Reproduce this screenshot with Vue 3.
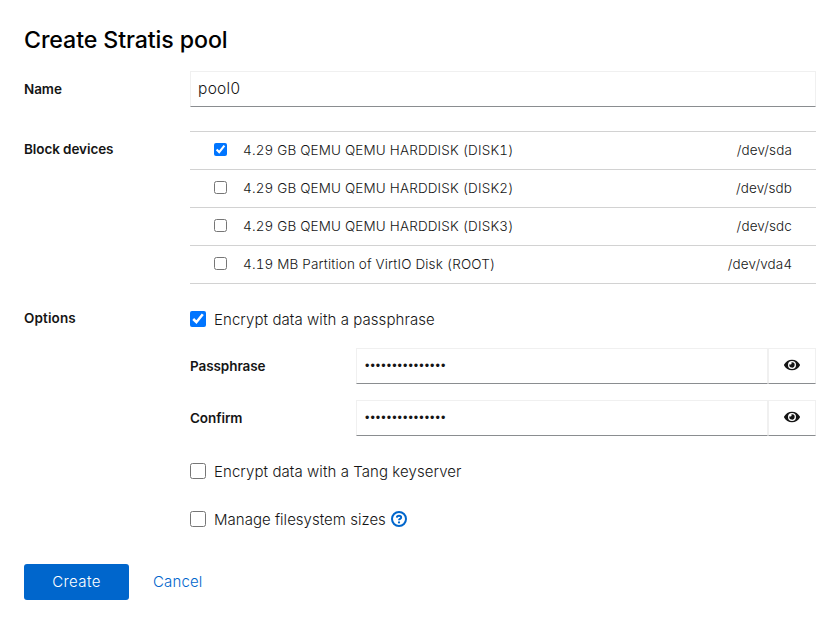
<script setup>
import { reactive, ref } from 'vue'

const name = ref('pool0')
const devices = reactive([
  { label: '4.29 GB QEMU QEMU HARDDISK (DISK1)', path: '/dev/sda', checked: true },
  { label: '4.29 GB QEMU QEMU HARDDISK (DISK2)', path: '/dev/sdb', checked: false },
  { label: '4.29 GB QEMU QEMU HARDDISK (DISK3)', path: '/dev/sdc', checked: false },
  { label: '4.19 MB Partition of VirtIO Disk (ROOT)', path: '/dev/vda4', checked: false },
])
const encrypt = ref(true)
const tang = ref(false)
const manage = ref(false)
const secrets = reactive([
  { label: 'Passphrase', value: 'correct-horse-b', shown: false },
  { label: 'Confirm', value: 'correct-horse-b', shown: false },
])
</script>

<template>
  <main class="dialog">
    <h1 class="title">Create Stratis pool</h1>
    <form class="form" @submit.prevent>
      <div class="group">
        <label class="label" for="pool-name">Name</label>
        <input id="pool-name" v-model="name" class="control" type="text">
      </div>

      <div class="group devices">
        <span class="label">Block devices</span>
        <ul class="list">
          <li v-for="d in devices" :key="d.path">
            <label class="row">
              <input v-model="d.checked" type="checkbox">
              <span class="device">{{ d.label }}</span>
              <span class="path">{{ d.path }}</span>
            </label>
          </li>
        </ul>
      </div>

      <div class="group options">
        <span class="label">Options</span>
        <div class="stack">
          <label class="check"><input v-model="encrypt" type="checkbox"><span>Encrypt data with a passphrase</span></label>
          <div v-if="encrypt" class="secrets">
            <div v-for="s in secrets" :key="s.label" class="group">
              <label class="label">{{ s.label }}</label>
              <div class="input-group">
                <input v-model="s.value" class="control secret" :type="s.shown ? 'text' : 'password'">
                <button class="reveal" type="button" @click="s.shown = !s.shown">
                  <svg viewBox="0 0 576 512" width="16" height="16"><path fill="currentColor" d="M572.52 241.4C518.29 135.59 410.93 64 288 64S57.68 135.64 3.48 241.41a32.35 32.35 0 0 0 0 29.19C57.71 376.41 165.07 448 288 448s230.32-71.64 284.52-177.41a32.35 32.35 0 0 0 0-29.19zM288 400a144 144 0 1 1 144-144 143.93 143.93 0 0 1-144 144zm0-240a95.31 95.31 0 0 0-25.31 3.79 47.85 47.85 0 0 1-66.9 66.9A95.78 95.78 0 1 0 288 160z" /></svg>
                </button>
              </div>
            </div>
          </div>
          <label class="check"><input v-model="tang" type="checkbox"><span>Encrypt data with a Tang keyserver</span></label>
          <div class="check manage">
            <input id="manage" v-model="manage" type="checkbox"><label for="manage">Manage filesystem sizes</label>
            <svg class="help" viewBox="0 0 16 16" width="16" height="16" fill="none" stroke="currentColor">
              <circle cx="8" cy="8" r="7" stroke-width="2" />
              <path d="M5.8 6.6C5.9 5.3 6.8 4.7 8 4.7c1.3 0 2.2.7 2.2 1.7 0 1.5-2.2 1.4-2.2 2.9" stroke-width="1.9" />
              <circle cx="8" cy="11.4" r="1.1" fill="currentColor" stroke="none" />
            </svg>
          </div>
        </div>
      </div>
    </form>
    <footer class="actions">
      <button class="primary" type="button">Create</button>
      <button class="link" type="button">Cancel</button>
    </footer>
  </main>
</template>

<style>
body { background: #fff; }
</style>

<style scoped>
.dialog {
  box-sizing: border-box;
  width: 840px;
  height: 624px;
  padding: 24px;
  color: #151515;
  font: 300 15px/24px Inter, "Liberation Sans", sans-serif;
  letter-spacing: 0.07px;
}
.title {
  margin: 0 0 15px;
  padding-top: 1px;
  color: #000;
  font-size: 23.2px;
  line-height: 31px;
  font-weight: 500;
  letter-spacing: -0.1px;
}
.form { display: flex; flex-direction: column; gap: 24px; }
.group { display: grid; grid-template-columns: 150px 1fr; column-gap: 16px; align-items: start; }
.label {
  padding-top: 8px;
  font-size: 13.5px;
  line-height: 21px;
  font-weight: 600;
  letter-spacing: -0.08px;
}
.options > .label { padding-top: 0; letter-spacing: 0.12px; }
.control {
  box-sizing: border-box;
  width: 100%;
  height: 36px;
  min-width: 0;
  margin: 0;
  padding: 0 7px 1px;
  border: 1px solid #f0f0f0;
  border-bottom-color: #8a8d90;
  border-radius: 0;
  outline: none;
  background: #fff;
  color: #151515;
  font: inherit;
  font-size: 15.5px;
  letter-spacing: 0.3px;
}
.list { margin: 0; padding: 0; list-style: none; border-top: 1px solid #d2d2d2; }
.list li { border-bottom: 1px solid #d2d2d2; }
.row {
  display: flex;
  align-items: center;
  height: 37px;
  padding: 0 24px;
  font-size: 13.5px;
  line-height: 21px;
}
.row input { width: 13px; height: 13px; margin: 0 16px 2px 0; }
.device { flex: 1; letter-spacing: 0.16px; font-variant-numeric: tabular-nums; }
.path { letter-spacing: 0.12px; }
.stack { display: flex; flex-direction: column; }
.check { display: flex; align-items: center; height: 24px; }
.check input { width: 16px; height: 16px; margin: 0 8px 2px 0; }
.secrets { display: flex; flex-direction: column; gap: 16px; margin: 16px 0 24px; }
.input-group { display: flex; }
.input-group .control { flex: 1; }
.secret[type="password"] {
  padding: 0 8px;
  font-family: "Liberation Sans", sans-serif;
  font-size: 12.5px;
  font-weight: 400;
  letter-spacing: 1.05px;
}
.reveal {
  display: flex;
  align-items: center;
  justify-content: center;
  box-sizing: border-box;
  width: 48px;
  height: 36px;
  padding: 0 0 2px;
  border: 1px solid #f0f0f0;
  border-bottom-color: #8a8d90;
  background: #fff;
  color: #151515;
}
.manage { margin-top: 24px; letter-spacing: 0.02px; }
.help { margin: 0 0 2px 5px; color: #06c; }
.actions { display: flex; gap: 24px; margin-top: 32px; }
.actions button { height: 36px; border: 0; font: inherit; }
.primary { width: 105px; padding: 0; border-radius: 3px; background: #06c; color: #fff; }
.actions .primary { letter-spacing: 0.4px; }
.link { padding: 0; background: none; color: #06c; letter-spacing: 0.15px; }
</style>
